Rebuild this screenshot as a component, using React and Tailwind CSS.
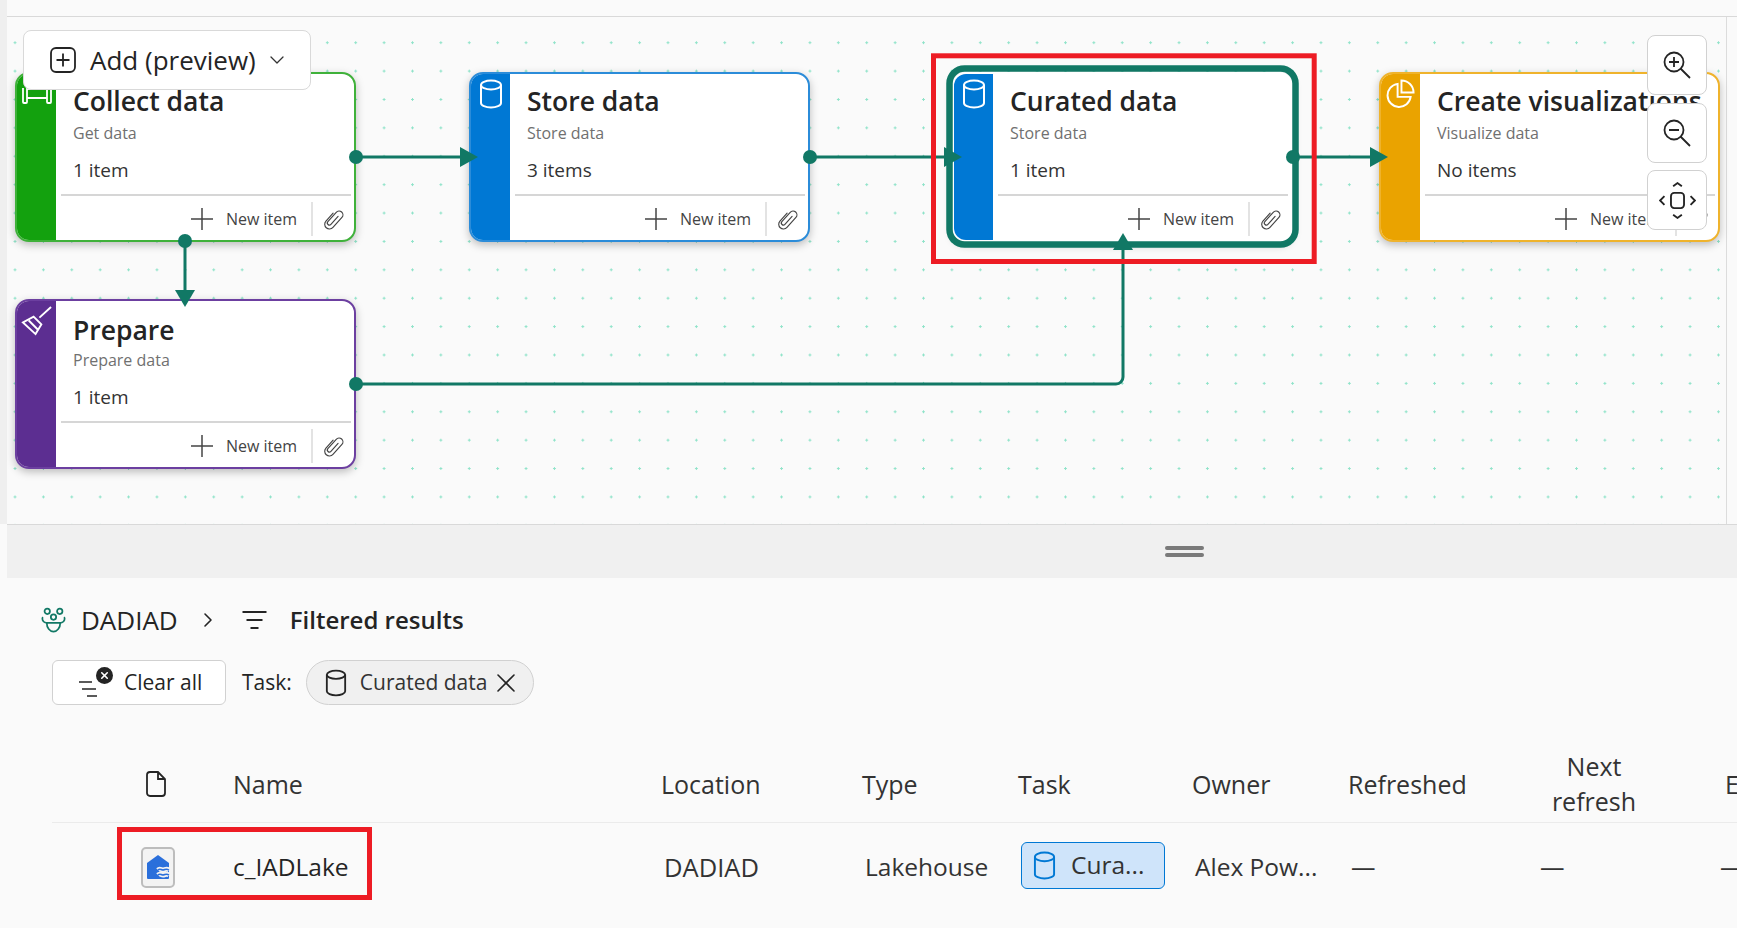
import { ChevronDown, ChevronRight, X } from "lucide-react";

const font = { fontFamily: '"Open Sans", "Noto Sans", sans-serif' };

function Cylinder({ className, stroke = "#fff" }) {
  return (
    <svg viewBox="0 0 24 30" fill="none" stroke={stroke} strokeWidth="2" className={className}>
      <ellipse cx="12" cy="6" rx="10" ry="4.5" />
      <path d="M2 6v18c0 2.5 4.500 4.500 10 4.500s10-2 10-4.500V6" />
    </svg>
  );
}

function Clip() {
  return (
    <svg viewBox="0 0 18 28" fill="none" stroke="#444" strokeWidth="1.300" className="h-[25px] w-[17px] rotate-[42deg]" strokeLinecap="round">
      <path d="M10.500 8v12a2.300 2.300 0 0 1-4.600 0V6a4.300 4.300 0 0 1 8.600 0v15a5.300 5.300 0 0 1-10.600 0V9" />
    </svg>
  );
}

function Plus() {
  return (
    <svg viewBox="0 0 22 22" stroke="#444" strokeWidth="1.500" className="h-[22px] w-[22px] shrink-0">
      <path d="M11 0v22M0 11h22" />
    </svg>
  );
}

function Couch() {
  return (
    <svg viewBox="0 0 30 16" fill="none" stroke="#fff" strokeWidth="1.800" strokeLinejoin="round" className="h-[16px] w-[30px]">
      <path d="M1 0v14a1 1 0 0 0 1 1h2a1 1 0 0 0 1-1V0M25 0v14a1 1 0 0 0 1 1h2a1 1 0 0 0 1-1V0M5 1h20M5 10h20" />
    </svg>
  );
}

function Broom() {
  return (
    <svg viewBox="0 0 32 32" fill="none" stroke="#fff" strokeWidth="2" className="h-[31px] w-[31px]">
      <path d="M31 1 19 12M13 11l8 8-6 10L2 17zM8 15l9 9" />
    </svg>
  );
}

function Pie() {
  return (
    <svg viewBox="0 0 30 30" fill="none" stroke="#fff" strokeWidth="2" className="h-[29px] w-[29px]">
      <path d="M12 5a12 12 0 1 0 13.500 13.500H12z" />
      <path d="M16 1.500a12.500 12.500 0 0 1 12.500 12.500H16z" />
    </svg>
  );
}

function NodeCard({ left, top, title, sub, count, bar, border, icon, low }) {
  return (
    <div
      className={`absolute flex h-[170px] w-[341px] overflow-hidden rounded-[14px] border-2 bg-white shadow-[0_3px_8px_rgba(0,0,0,0.25)] ${border}`}
      style={{ left, top }}
    >
      <div className={`flex w-[39px] shrink-0 justify-center pt-[5px] ${bar}`}>{icon}</div>
      <div className="flex min-w-0 flex-1 flex-col pl-[5px] pr-[3px]">
        <div className="flex h-[122px] flex-col border-b-2 border-[#d6d6d6] pl-[12px]">
          <div className={`whitespace-nowrap text-[26.500px] font-semibold leading-[34px] text-[#242424] ${low ? "mt-[12px]" : "mt-[10px]"}`}>{title}</div>
          <div className={`text-[16px] leading-[22px] text-[#707070] ${low ? "mt-[2px]" : "mt-[4px]"}`}>{sub}</div>
          <div className="mt-[13px] text-[19px] leading-[26px] text-[#333]">{count}</div>
        </div>
        <div className="flex flex-1 items-center justify-end pt-[2px]">
          <Plus />
          <span className="ml-[13px] whitespace-nowrap text-[16px] text-[#444]">New item</span>
          <div className="ml-[14px] h-[34px] w-[2px] bg-[#e3e3e3]" />
          <div className="ml-[12px] mr-[9px] flex"><Clip /></div>
        </div>
      </div>
    </div>
  );
}

function ToolButton({ top, children }) {
  return (
    <div
      className="absolute left-[1640px] flex h-[60px] w-[60px] items-center justify-center rounded-[8px] border border-[#d1d1d1] bg-white"
      style={{ top }}
    >
      {children}
    </div>
  );
}

export default function App() {
  return (
    <div className="flex h-screen w-full flex-col overflow-hidden bg-[#fafafa]" style={font}>
      <div className="flex h-[524px] shrink-0">
        <div className="w-[7px] shrink-0 bg-[#efefef]" />
        <div className="flex min-w-0 flex-1 flex-col">
          <div className="h-[17px] shrink-0 border-b border-[#d9d9d9]" />
          <div className="relative w-[1720px] flex-1 border-r border-[#dcdcdc] bg-[radial-gradient(circle,#8fe3c9_1px,transparent_1.2px)] bg-[length:28.4px_28.4px] bg-[position:-6.200px_11.500px]">
            {/* cards, positions are relative to the canvas at 7,17 */}
            <NodeCard left={8} top={55} title="Collect data" sub="Get data" count="1 item" bar="bg-[#13a10e]" border="border-[#3fb13a]" icon={<div className="mt-[9px] flex"><Couch /></div>} />
            <NodeCard left={462} top={55} title="Store data" sub="Store data" count="3 items" bar="bg-[#0078d4]" border="border-[#2b8cd9]" icon={<Cylinder className="h-[30px] w-[24px]" />} />
            <NodeCard left={945} top={55} title="Curated data" sub="Store data" count="1 item" bar="bg-[#0078d4]" border="border-white" icon={<Cylinder className="h-[30px] w-[24px]" />} />
            <NodeCard left={1372} top={55} title="Create visualizations" sub="Visualize data" count="No items" bar="bg-[#eaa300]" border="border-[#efb32c]" icon={<Pie />} />
            <NodeCard left={8} top={282} low title="Prepare" sub="Prepare data" count="1 item" bar="bg-[#5c2e91]" border="border-[#6c3fa0]" icon={<Broom />} />

            {/* connectors */}
            <svg className="pointer-events-none absolute left-0 top-0 h-[507px] w-[1720px]" fill="none">
              <rect x="942.500" y="51.500" width="346" height="176" rx="15" stroke="#117865" strokeWidth="6.500" />
              <g stroke="#117865" strokeWidth="3">
                <path d="M349 140H455" />
                <path d="M803 140H940" />
                <path d="M1286 140H1365" />
                <path d="M178 224v52" />
                <path d="M349 367H1109a7 7 0 0 0 7-7V225" />
              </g>
              <g fill="#117865">
                <circle cx="349" cy="140" r="7" />
                <circle cx="803" cy="140" r="7" />
                <circle cx="1286" cy="140" r="7" />
                <circle cx="178" cy="224" r="7" />
                <circle cx="349" cy="367" r="7" />
                <path d="M453 130l18 10-18 10z" />
                <path d="M937 130l18 10-18 10z" />
                <path d="M1363 130l18 10-18 10z" />
                <path d="M168 273l10 17 10-17z" />
                <path d="M1106 233l10-17 10 17z" />
              </g>
              <rect x="926.500" y="38.800" width="380.700" height="205.700" stroke="#ed1c24" strokeWidth="5" />
            </svg>

            {/* Add button */}
            <div className="absolute left-[16px] top-[13px] flex h-[60px] w-[288px] items-center rounded-[8px] border border-[#d9d9d9] bg-white pl-[26px]">
              <svg viewBox="0 0 26 26" fill="none" stroke="#242424" strokeWidth="1.800" className="h-[26px] w-[26px]">
                <rect x="1" y="1" width="24" height="24" rx="5" />
                <path d="M13 6.500v13M6.500 13h13" />
              </svg>
              <span className="ml-[14px] whitespace-nowrap text-[26px] font-medium text-[#242424]">Add (preview)</span>
              <ChevronDown className="ml-[9px] h-[24px] w-[24px] text-[#333]" strokeWidth={1.300} />
            </div>

            <ToolButton top={18}>
              <svg viewBox="0 0 28 28" fill="none" stroke="#242424" strokeWidth="1.800" className="h-[28px] w-[28px]">
                <circle cx="11" cy="11" r="9.500" />
                <path d="M17.500 17.500 27 27M11 6v10M6 11h10" />
              </svg>
            </ToolButton>
            <ToolButton top={86}>
              <svg viewBox="0 0 28 28" fill="none" stroke="#242424" strokeWidth="1.800" className="h-[28px] w-[28px]">
                <circle cx="11" cy="11" r="9.500" />
                <path d="M17.500 17.500 27 27M6 11h10" />
              </svg>
            </ToolButton>
            <ToolButton top={153}>
              <svg viewBox="0 0 34 34" fill="none" stroke="#242424" strokeWidth="1.700" className="h-[37px] w-[37px]">
                <rect x="11" y="10" width="12" height="14" rx="3" />
                <path d="m13 4 4-3 4 3M13 30l4 3 4-3M5 13l-4 4 4 4M29 13l4 4-4 4" />
              </svg>
            </ToolButton>
          </div>
        </div>
      </div>

      {/* splitter */}
      <div className="ml-[7px] flex h-[54px] shrink-0 items-center border-t border-[#d9d9d9] bg-[#f0f0f0] pl-[1158px]">
        <div className="flex flex-col gap-[3px]">
          <div className="h-[4px] w-[39px] rounded-sm bg-[#7a7a7a]" />
          <div className="h-[4px] w-[39px] rounded-sm bg-[#7a7a7a]" />
        </div>
      </div>

      <div className="ml-[7px] min-h-0 flex-1">
        {/* breadcrumb */}
        <div className="mt-[22px] flex h-[40px] items-center pl-[34px]">
          <svg viewBox="0 0 26 28" fill="none" stroke="#117865" strokeWidth="1.800" className="h-[28px] w-[25px]">
            <circle cx="6.500" cy="5" r="2.800" />
            <circle cx="19.500" cy="5" r="2.800" />
            <circle cx="13" cy="11" r="2.800" />
            <path d="M2 11c-1 1-1 5 3 6M24 11c1 1 1 5-3 6M6 17h14c0 5-3 9-7 9s-7-4-7-9z" />
          </svg>
          <span className="ml-[15px] text-[26px] text-[#242424]">DADIAD</span>
          <ChevronRight className="ml-[18px] h-[24px] w-[24px] text-[#242424]" strokeWidth={1.600} />
          <svg viewBox="0 0 26 20" stroke="#242424" strokeWidth="1.800" className="ml-[21px] h-[20px] w-[27px]">
            <path d="M1 2h24M5 10h16M9 18h8" />
          </svg>
          <span className="ml-[22px] text-[24px] font-semibold text-[#242424]">Filtered results</span>
        </div>

        {/* filter chips */}
        <div className="mt-[20px] flex items-center pl-[45px]">
          <div className="flex h-[45px] w-[174px] items-center rounded-[6px] border border-[#d1d1d1] bg-white pl-[26px]">
            <div className="relative h-[30px] w-[30px]">
              <svg viewBox="0 0 26 20" stroke="#242424" strokeWidth="1.500" className="absolute bottom-0 left-0 h-[20px] w-[26px]">
                <path d="M0 4h13M3 11h14M8 18h10" />
              </svg>
              <div className="absolute right-[-4px] top-[-1px] flex h-[17px] w-[17px] items-center justify-center rounded-full bg-[#242424]">
                <X className="h-[11px] w-[11px] text-white" strokeWidth={3.500} />
              </div>
            </div>
            <span className="ml-[15px] text-[21px] text-[#242424]">Clear all</span>
          </div>
          <span className="ml-[16px] text-[21px] font-medium text-[#242424]">Task:</span>
          <div className="ml-[14px] flex h-[45px] w-[228px] items-center rounded-full border border-[#d1d1d1] bg-[#f0f0f0] pl-[18px]">
            <Cylinder className="h-[30px] w-[22px]" stroke="#242424" />
            <span className="ml-[13px] whitespace-nowrap text-[21px] text-[#333]">Curated data</span>
            <X className="ml-[3px] h-[32px] w-[32px] text-[#242424]" strokeWidth={1.200} />
          </div>
        </div>

        {/* table */}
        <div className="ml-[45px] mt-[28px] flex h-[90px] items-center border-b border-[#ebebeb] pt-[13px] text-[25px] font-medium leading-[36px] text-[#333]">
          <div className="flex w-[181px] shrink-0 pl-[94px]">
            <svg viewBox="0 0 20 26" fill="none" stroke="#242424" strokeWidth="1.800" className="h-[26px] w-[20px]">
              <path d="M4 1h8l7 7v14a3 3 0 0 1-3 3H4a3 3 0 0 1-3-3V4a3 3 0 0 1 3-3zM12 1v7h7" />
            </svg>
          </div>
          <div className="w-[428px] shrink-0">Name</div>
          <div className="w-[201px] shrink-0">Location</div>
          <div className="w-[156px] shrink-0">Type</div>
          <div className="w-[174px] shrink-0">Task</div>
          <div className="w-[156px] shrink-0">Owner</div>
          <div className="w-[172px] shrink-0">Refreshed</div>
          <div className="mr-[57px] w-[148px] shrink-0 text-center leading-[35px]">Next<br />refresh</div>
          <div className="shrink-0">E</div>
        </div>
        <div className="relative ml-[45px] -mt-[1px] flex h-[90px] items-center text-[24.500px] leading-[30px] text-[#333]">
          <div className="flex w-[181px] shrink-0 pl-[89px]">
            <div className="flex h-[41px] w-[34px] items-center justify-center rounded-[5px] border-2 border-[#bdbdbd] bg-[#f3f3f3]">
              <svg viewBox="0 0 24 26" className="h-[26px] w-[24px]">
                <path d="M12 1 23 9v15a1 1 0 0 1-1 1H2a1 1 0 0 1-1-1V9z" fill="#2a6fdb" />
                <path d="M12 16c2-2 3 0 5 0s3-2 6 0M12 21c2-2 3 0 5 0s3-2 6 0" fill="none" stroke="#f3f3f3" strokeWidth="5" />
                <path d="M12 16c2-2 3 0 5 0s3-2 6 0M12 21c2-2 3 0 5 0s3-2 6 0" fill="none" stroke="#2a6fdb" strokeWidth="1.500" />
              </svg>
            </div>
          </div>
          <div className="w-[431px] shrink-0 text-[#242424]">c_IADLake</div>
          <div className="w-[201px] shrink-0 text-[25.500px]">DADIAD</div>
          <div className="w-[156px] shrink-0">Lakehouse</div>
          <div className="-mt-[4px] w-[174px] shrink-0">
            <div className="flex h-[47px] w-[144px] items-center rounded-[6px] border border-[#0078d4] bg-[#cfe4fa] pl-[11px]">
              <Cylinder className="h-[31px] w-[23px]" stroke="#0078d4" />
              <span className="ml-[15px]">Cura...</span>
            </div>
          </div>
          <div className="w-[156px] shrink-0 whitespace-nowrap">Alex Pow...</div>
          <div className="w-[189px] shrink-0">—</div>
          <div className="w-[180px] shrink-0">—</div>
          <div className="shrink-0">—</div>
          {/* red highlight */}
          <div className="absolute left-[65px] top-[5px] h-[73px] w-[255px] border-[5px] border-[#ed1c24]" />
        </div>
      </div>
    </div>
  );
}
